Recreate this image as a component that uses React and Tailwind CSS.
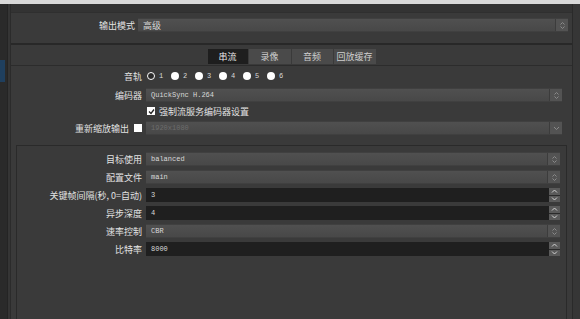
import React from 'react';

const cjk = "font-['Noto_Sans_CJK_SC','Noto_Sans',sans-serif]";
const mono = "font-['Liberation_Mono','DejaVu_Sans_Mono',monospace]";

function UpDown() {
    return (
        <svg width="7" height="9" viewBox="0 0 7 9" fill="none" stroke="#8a8a8a" strokeWidth="1">
            <path d="M1.5 3.5 L3.5 1.5 L5.5 3.5" />
            <path d="M1.5 5.5 L3.5 7.5 L5.5 5.5" />
        </svg>
    );
}

function Down() {
    return (
        <svg width="7" height="5" viewBox="0 0 7 5" fill="none" stroke="#8a8a8a" strokeWidth="1">
            <path d="M1 1 L3.5 3.5 L6 1" />
        </svg>
    );
}

function Combo({ value, font = `text-[7px] ${mono}`, disabled = false, down = false }) {
    return (
        <div className="flex h-[14px] flex-1 items-stretch border-y border-[#404040] bg-gradient-to-b from-[#505050] to-[#484848]">
            <span className={`flex flex-1 items-center pl-[5px] leading-none ${font} ${disabled ? 'text-[#6c6c6c]' : 'text-[#d8d8d8]'}`}>
                {value}
            </span>
            <div className="flex w-[13px] items-center justify-center border-l border-[#3c3c3c] bg-[#535353]">
                {down ? <Down /> : <UpDown />}
            </div>
        </div>
    );
}

function Spin({ value }) {
    return (
        <div className="flex h-[14px] flex-1 items-stretch bg-[#1f1f1f]">
            <span className={`flex flex-1 items-center pl-[5px] text-[7px] leading-none text-[#d8d8d8] ${mono}`}>{value}</span>
            <div className="flex w-[11px] flex-col gap-px bg-[#2a2a2a]">
                <div className="flex flex-1 items-center justify-center bg-[#5a5a5a]">
                    <svg width="7" height="4" viewBox="0 0 7 4" fill="none" stroke="#d0d0d0" strokeWidth="1">
                        <path d="M1 3.5 L3.5 1 L6 3.5" />
                    </svg>
                </div>
                <div className="flex flex-1 items-center justify-center bg-[#5a5a5a]">
                    <svg width="7" height="4" viewBox="0 0 7 4" fill="none" stroke="#d0d0d0" strokeWidth="1">
                        <path d="M1 0.5 L3.5 3 L6 0.5" />
                    </svg>
                </div>
            </div>
        </div>
    );
}

function Row({ label, labelW, children, h = 'h-[14px]' }) {
    return (
        <div className={`flex ${h} items-center gap-[4px]`}>
            <div className={`${labelW} shrink-0 text-right text-[9px] leading-none text-[#e2e2e2] ${cjk}`}>{label}</div>
            {children}
        </div>
    );
}

function Radio({ n, checked }) {
    return (
        <div className="flex items-center gap-[4px]">
            {checked ? (
                <span className="block h-[8px] w-[8px] shrink-0 rounded-full border-[1.5px] border-white bg-[#2a2a2a]" />
            ) : (
                <span className="block h-[8px] w-[8px] shrink-0 rounded-full bg-white" />
            )}
            <span className={`w-[5px] text-[7px] leading-none text-[#d8d8d8] ${mono}`}>{n}</span>
        </div>
    );
}

const tabs = [
    { name: '串流', w: 'w-[40px]', active: true },
    { name: '录像', w: 'w-[42px]' },
    { name: '音频', w: 'w-[41px]' },
    { name: '回放缓存', w: 'w-[42px]' },
];

export default function App() {
    return (
        <div className="flex h-[319px] w-[580px] flex-col overflow-hidden bg-[#333333]">
            <div className="h-[4px] bg-[#d9d9d9]" />
            <div className="flex flex-1">
                {/* side list */}
                <div className="flex w-[7px] flex-col bg-[#2a2a2a]">
                    <div className="mt-[56px] h-[22px] w-[5px] bg-[#1f3f5e]" />
                </div>
                <div className="w-px bg-[#242424]" />
                <div className="w-[2px] bg-[#353535]" />
                <div className="w-px bg-[#2b2b2b]" />

                {/* scroll content */}
                <div className="flex flex-1 flex-col pt-[8px]">
                    <div className="flex flex-1 flex-col border-t border-[#2f2f2f] bg-[#3a3a3a]">
                        <div className="pt-[5px] pr-[4px]">
                            <div className="flex h-[14px] items-center gap-[3px]">
                                <div className={`w-[124px] shrink-0 text-right text-[9px] leading-none text-[#e2e2e2] ${cjk}`}>输出模式</div>
                                <Combo value="高级" font={`text-[9px] ${cjk}`} />
                            </div>
                        </div>
                        <div className="mt-[11px] h-[2px] bg-[#282828]" />

                        {/* tabs */}
                        <div className="flex justify-center gap-px pt-[4px]">
                            {tabs.map((t) => (
                                <div
                                    key={t.name}
                                    className={`flex h-[15px] ${t.w} items-center justify-center text-[9px] leading-none ${cjk} ${t.active ? 'bg-[#1e1e1e] text-[#e6e6e6]' : 'bg-[#4a4a4a] text-[#cfcfcf]'}`}
                                >
                                    {t.name}
                                </div>
                            ))}
                        </div>

                        <div className="mt-px flex flex-1 flex-col border-t border-[#2c2c2c] pt-[4px]">
                            <div className="flex flex-col pr-[10px]">
                                <Row label="音轨" labelW="w-[131px]" h="h-[12px]">
                                    <div className="flex gap-[7px] pl-[1px]">
                                        <Radio n="1" checked />
                                        <Radio n="2" />
                                        <Radio n="3" />
                                        <Radio n="4" />
                                        <Radio n="5" />
                                        <Radio n="6" />
                                    </div>
                                </Row>
                                <div className="mt-[6px]">
                                    <Row label="编码器" labelW="w-[131px]">
                                        <Combo value="QuickSync H.264" />
                                    </Row>
                                </div>
                                <div className="mt-[3px] flex h-[12px] items-center gap-[4px] pl-[136px]">
                                    <span className="flex h-[8px] w-[8px] items-center justify-center bg-white">
                                        <svg width="7" height="7" viewBox="0 0 7 7" fill="none" stroke="#222" strokeWidth="1.3">
                                            <path d="M1 3.5 L3 5.5 L6 1.5" />
                                        </svg>
                                    </span>
                                    <span className={`text-[9px] leading-none text-[#e2e2e2] ${cjk}`}>强制流服务编码器设置</span>
                                </div>
                                <div className="mt-[4px] flex h-[14px] items-center gap-[4px]">
                                    <div className="flex w-[131px] shrink-0 items-center justify-end gap-[5px]">
                                        <span className={`text-[9px] leading-none text-[#e2e2e2] ${cjk}`}>重新缩放输出</span>
                                        <span className="h-[8px] w-[8px] bg-white" />
                                    </div>
                                    <Combo value="1920x1080" disabled down />
                                </div>
                            </div>

                            {/* encoder settings group */}
                            <div className="mt-[10px] mr-[5px] ml-[5px] flex flex-1 flex-col gap-[4px] border-x border-t border-[#2a2a2a] pt-[6px] pr-[6px]">
                                <Row label="目标使用" labelW="w-[125px]">
                                    <Combo value="balanced" />
                                </Row>
                                <Row label="配置文件" labelW="w-[125px]">
                                    <Combo value="main" />
                                </Row>
                                <Row label="关键帧间隔(秒, 0=自动)" labelW="w-[125px]">
                                    <Spin value="3" />
                                </Row>
                                <Row label="异步深度" labelW="w-[125px]">
                                    <Spin value="4" />
                                </Row>
                                <Row label="速率控制" labelW="w-[125px]">
                                    <Combo value="CBR" />
                                </Row>
                                <Row label="比特率" labelW="w-[125px]">
                                    <Spin value="8000" />
                                </Row>
                            </div>
                        </div>
                    </div>
                </div>

                <div className="w-px bg-[#2a2a2a]" />
                <div className="w-[7px] bg-[#363636]" />
            </div>
        </div>
    );
}
